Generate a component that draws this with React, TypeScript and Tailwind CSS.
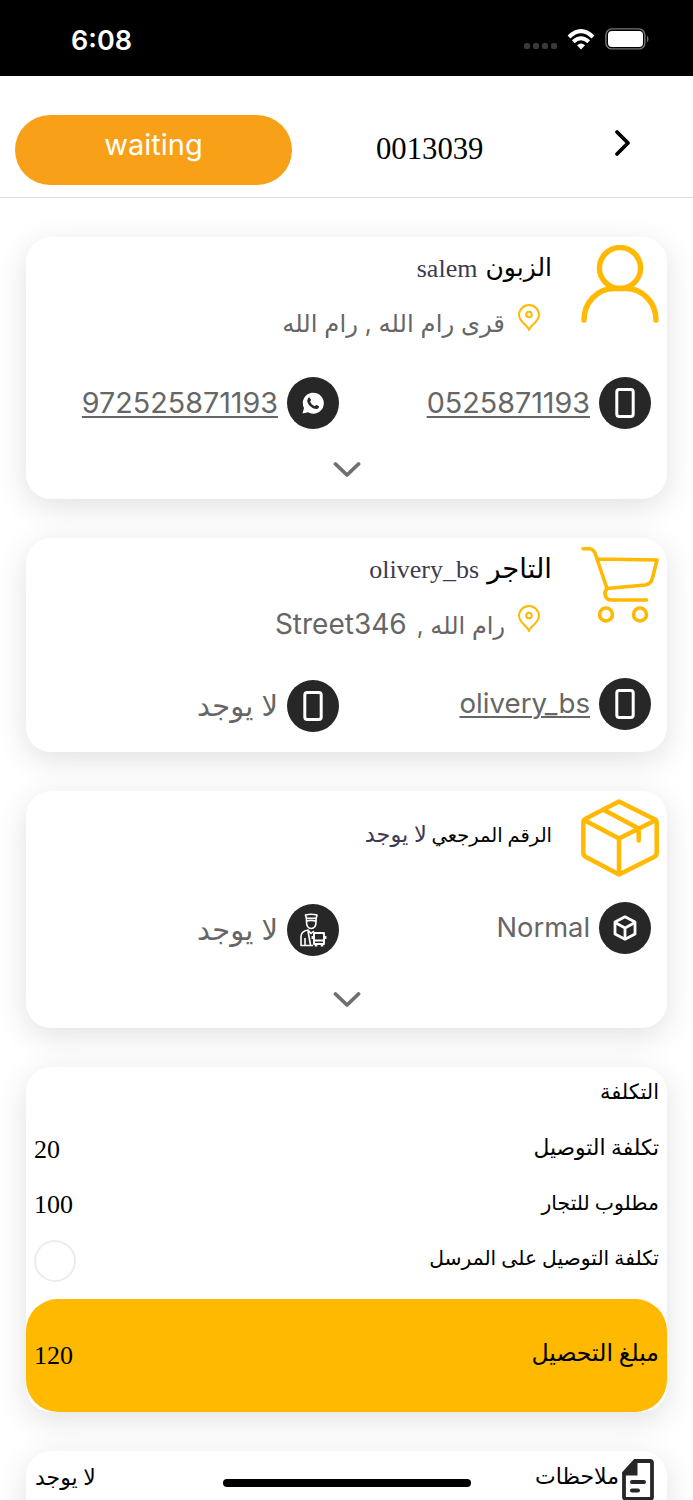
import type { ReactNode } from "react"

const SERIF = "font-['Liberation_Serif','DejaVu_Sans',serif]"
const SANS = "font-[Inter,'DejaVu_Sans',sans-serif]"

export default function App() {
  return (
    <div dir="rtl" className="relative h-[1500px] w-[693px] overflow-hidden bg-white text-black">
      <StatusBar />
      <Header />

      <main className="flex flex-col gap-[39px] px-[26px] pt-[39px]">
        <Card className="h-[262px]">
          <div className="flex h-[130px]">
            <PersonIcon />
            <Heading label="الزبون" value="salem" labelClass="text-[25px]">
              <span className="text-[24.3px]">قرى رام الله , رام الله</span>
            </Heading>
          </div>
          <ContactRow>
            <Contact icon={<PhoneIcon />} text="0525871193" textClass="text-[28.7px] underline" />
            <Contact icon={<WhatsappIcon />} text="972525871193" textClass="text-[28.7px] underline" />
          </ContactRow>
          <Chevron className="mt-[22px]" />
        </Card>

        <Card className="h-[214px]">
          <div className="flex h-[130px]">
            <CartIcon />
            <Heading label="التاجر" value="olivery_bs" labelClass="text-[27.5px]">
              <span className="text-[24px]">رام الله ,</span>
              <span className="mr-[10px] text-[28px]">Street346</span>
            </Heading>
          </div>
          <ContactRow>
            <Contact icon={<PhoneIcon />} text="olivery_bs" textClass="text-[27.7px] underline" />
            <Contact icon={<PhoneIcon />} text="لا يوجد" textClass="text-[29px]" className="pt-[3px]" />
          </ContactRow>
        </Card>

        <Card className="h-[237px]">
          <div className="flex h-[101px]">
            <BoxIcon />
            <p className={`mr-[29px] pt-[28px] text-[19.5px] leading-[32px] ${SERIF}`}>
              الرقم المرجعي <span className="text-[22.500px] text-[#3d3a50]">لا يوجد</span>
            </p>
          </div>
          <ContactRow>
            <Contact icon={<CubeIcon />} text="Normal" textClass="text-[27.3px]" />
            <Contact icon={<DriverIcon />} text="لا يوجد" textClass="text-[29px]" className="pt-[3px]" />
          </ContactRow>
          <Chevron className="mt-[27px]" />
        </Card>

        <Card className="h-[345px]">
          <div className={`flex h-[232px] flex-col px-[8px] ${SERIF}`}>
            <CostRow label="التكلفة" labelClass="text-[21px]" />
            <CostRow label="تكلفة التوصيل" labelClass="text-[21.8px]" value="20" />
            <CostRow label="مطلوب للتجار" labelClass="text-[20.4px]" value="100" />
            <div className="flex h-[55px] items-center justify-between">
              <span className="pb-[3px] text-[20.3px]">تكلفة التوصيل على المرسل</span>
              <span className="mt-[3px] size-[42px] rounded-full border-2 border-[#ececec]" />
            </div>
          </div>
          <div className={`flex h-[113px] items-center justify-between rounded-[32px] bg-[#ffb900] px-[8px] ${SERIF}`}>
            <span className="pb-[3px] text-[23.6px]">مبلغ التحصيل</span>
            <span className="text-[26px]">120</span>
          </div>
        </Card>

        <Card className="h-[100px]">
          <div className={`flex px-[8px] pt-[8px] text-[22px] ${SERIF}`}>
            <NoteIcon />
            <span className="mr-[3px] leading-[36px]">ملاحظات</span>
            <span className="ml-[1px] mr-auto leading-[38px]">لا يوجد</span>
          </div>
        </Card>
      </main>

      <div className="absolute left-[223px] top-[1479px] h-[8px] w-[248px] rounded-full bg-black" />
    </div>
  )
}

function StatusBar() {
  return (
    <div dir="ltr" className="flex h-[76px] items-center justify-between bg-black pl-[71px] pr-[44px] pt-[3px] text-white">
      <span className="mt-[3px] font-[Inter,sans-serif] text-[27px] font-semibold">6:08</span>
      <div className="flex items-center">
        <div className="mr-[10px] mt-[12px] flex gap-[3px]">
          <i className="size-[6px] rounded-[2px] bg-[#3a3a3a]" />
          <i className="size-[6px] rounded-[2px] bg-[#3a3a3a]" />
          <i className="size-[6px] rounded-[2px] bg-[#3a3a3a]" />
          <i className="size-[6px] rounded-[2px] bg-[#3a3a3a]" />
        </div>
        <svg width="28" height="21" viewBox="0 0 28 21" fill="none" stroke="white" strokeWidth="4">
          <path d="M2 8Q14-3.600 26 8" />
          <path d="M6.300 12.700Q14 5.800 21.700 12.700" />
          <path d="M10 16.200Q14 12.700 18 16.200L14 20.500Z" fill="white" stroke="none" />
        </svg>
        <svg className="-mt-[1px] ml-[10px]" width="44" height="22" viewBox="0 0 44 22">
          <rect x="0.900" y="0.900" width="39" height="20" rx="6" fill="none" stroke="#777" strokeWidth="1.400" />
          <rect x="3" y="3" width="35" height="16" rx="4" fill="white" />
          <path d="M42 7.500Q45 11 42 14.500Z" fill="#777" />
        </svg>
      </div>
    </div>
  )
}

function Header() {
  return (
    <header className="h-[122px] border-b border-[#dedede]">
      <div dir="ltr" className="flex pl-[15px] pt-[39px]">
        <div className="flex h-[70px] w-[277px] justify-center rounded-[35px] bg-[#f9a019] pt-[12px] font-[Inter,sans-serif] text-[29px] leading-[36px] text-white">
          waiting
        </div>
        <span className="ml-[84px] mt-[16px] font-['Liberation_Serif',serif] text-[30.7px] leading-[36px]">0013039</span>
        <svg className="ml-[131px] mt-[14px]" width="18" height="28" viewBox="0 0 18 28" fill="none" stroke="black" strokeWidth="3.800" strokeLinecap="round" strokeLinejoin="round">
          <path d="M3 3L14 14L3 25" />
        </svg>
      </div>
    </header>
  )
}

function Card({ className, children }: { className: string; children: ReactNode }) {
  return (
    <section className={`shrink-0 rounded-[25px] bg-white shadow-[0_8px_32px_rgba(0,0,0,0.12)] ${className}`}>
      {children}
    </section>
  )
}

type HeadingProps = { label: string; value: string; labelClass: string; children: ReactNode }

function Heading({ label, value, labelClass, children }: HeadingProps) {
  return (
    <div className="mr-[29px] pt-[12px]">
      <p className={`flex h-[38px] items-center gap-[8px] ${SERIF}`}>
        <span className={labelClass}>{label}</span>
        <span className="pt-[1px] text-[26px] text-[#3d3a50]">{value}</span>
      </p>
      <div className={`mr-[12px] mt-[12px] flex h-[46px] items-center gap-[13px] text-[#666] ${SANS}`}>
        <svg className="-mt-[8px]" width="22" height="28" viewBox="0 0 22 28" fill="none" stroke="#ffb900" strokeWidth="2" strokeLinejoin="round">
          <path d="M11 26C10 21 1 18 1 11A10 10 0 0 1 21 11C21 18 12 21 11 26Z" />
          <circle cx="11" cy="10.500" r="2.800" />
        </svg>
        <p className="flex items-baseline pt-[2px]">{children}</p>
      </div>
    </div>
  )
}

function ContactRow({ children }: { children: ReactNode }) {
  return <div className="flex h-[72px] items-center pr-[16px]">{children}</div>
}

type ContactProps = { icon: ReactNode; text: string; textClass: string; className?: string }

function Contact({ icon, text, textClass, className = "" }: ContactProps) {
  return (
    <div className={`flex w-[312px] items-center gap-[9px] text-[#666] ${SANS} ${className}`}>
      <span className="flex size-[52px] shrink-0 items-center justify-center rounded-full bg-[#272727]">{icon}</span>
      <span className={`decoration-2 underline-offset-[3px] ${textClass}`}>{text}</span>
    </div>
  )
}

function CostRow({ label, labelClass, value }: { label: string; labelClass: string; value?: string }) {
  return (
    <div className="flex h-[55px] items-center justify-between">
      <span className={`pb-[3px] ${labelClass}`}>{label}</span>
      <span className="text-[26px]">{value}</span>
    </div>
  )
}

function Chevron({ className }: { className: string }) {
  return (
    <svg className={`mx-auto ${className}`} width="28" height="18" viewBox="0 0 28 18" fill="none" stroke="#6f6f6f" strokeWidth="3.800" strokeLinecap="round" strokeLinejoin="round">
      <path d="M2.500 3L14 14L25.500 3" />
    </svg>
  )
}

function PersonIcon() {
  return (
    <svg className="mr-[8px] mt-[8px]" width="78" height="78" viewBox="0 0 78 78" fill="none" stroke="#ffb900" strokeWidth="5.400" strokeLinecap="round">
      <circle cx="39" cy="23" r="20.500" />
      <path d="M3 75C3 57 17 43.500 33 43.500H45C61 43.500 75 57 75 75" />
    </svg>
  )
}

function CartIcon() {
  return (
    <svg className="mr-[8px] mt-[8px]" width="78" height="78" viewBox="0 0 78 78" fill="none" stroke="#ffb900" strokeWidth="3.600" strokeLinecap="round" strokeLinejoin="round">
      <path d="M2 2.700H8C12 2.700 14 6 15 10L26 42.500L64 39C68 38.500 70.500 36 71.500 32L76 14L16 13" />
      <path d="M26 42.500C22 47 24 54 31 54H65.500" />
      <circle cx="25" cy="68.500" r="6.500" />
      <circle cx="59" cy="68.500" r="6.500" />
    </svg>
  )
}

function BoxIcon() {
  return (
    <svg className="mr-[8px] mt-[8px]" width="78" height="78" viewBox="0 0 78 78" fill="none" stroke="#ffb900" strokeWidth="4.500" strokeLinejoin="round" strokeLinecap="round">
      <path d="M38 2.500L73 20Q75.700 21.500 75.700 24V54Q75.700 56.500 73 58L38 75.500L5 58Q2.300 56.500 2.300 54V24Q2.300 21.500 4 20Z" />
      <path d="M3 21L38 39.500L75 21M38 39.500V75M23 11L57.700 29.500V41.500" />
    </svg>
  )
}

function PhoneIcon() {
  return (
    <svg width="20" height="32" viewBox="0 0 20 32">
      <rect x="1.800" y="2.500" width="16.400" height="27" rx="2.500" fill="none" stroke="white" strokeWidth="3" />
    </svg>
  )
}

function WhatsappIcon() {
  return (
    <svg width="22" height="22" viewBox="0 0 22 22">
      <path d="M0.500 21.500L2 16A10.500 10.500 0 1 1 6 20.200Z" fill="white" />
      <path d="M6 6.500C7 4.700 8.200 5.500 9 8C9.200 8.900 7.800 9 8.200 10C9.300 12 10.500 13 12.500 14C13.500 14.500 13.700 12.800 14.600 13.100L17 14.300C17.500 15 16.500 17 14.500 17C10 17 5 12 5.200 8.500Z" fill="#272727" />
    </svg>
  )
}

function CubeIcon() {
  return (
    <svg width="24" height="26" viewBox="0 0 24 26" fill="none" stroke="white" strokeWidth="2.800" strokeLinejoin="round">
      <path d="M12 1.800L22 7V19L12 24.200L2 19V7Z" />
      <path d="M2 7.500L12 13L22 7.500M12 13V24" />
    </svg>
  )
}

function DriverIcon() {
  return (
    <svg width="27" height="34" viewBox="0 0 27 34" fill="none" stroke="white" strokeWidth="1.600" strokeLinejoin="round">
      <path d="M5.500 2Q11 0.500 17 2L16 6V9Q16 15.500 11.200 15.500Q6.500 15.500 6.500 9V6Z" />
      <path d="M6.500 5.200H16M6 8.200Q11 6.500 16.500 8.200" />
      <path d="M14 18L11 20.500L8 17Q1 18 1 24V32.500H13M5 32V25M8 18L10.500 32" />
      <path d="M14 20H24V31H14ZM14 27.500H24M12.500 23V26M25.500 23V26" strokeWidth="1.900" />
      <path d="M16 31V33.500M22 31V33.500" strokeWidth="2.500" />
    </svg>
  )
}

function NoteIcon() {
  return (
    <svg className="mr-[5px]" width="32" height="42" viewBox="0 0 32 42">
      <path d="M13 2H28Q30 2 30 4V38Q30 40 28 40H4Q2 40 2 38V14Z" fill="white" stroke="#272727" strokeWidth="3.800" />
      <path d="M15.500 1V16.500H1V13Z" fill="#272727" />
      <path d="M10 23H22M10 31.500H16" stroke="#272727" strokeWidth="4" strokeLinecap="round" />
    </svg>
  )
}
